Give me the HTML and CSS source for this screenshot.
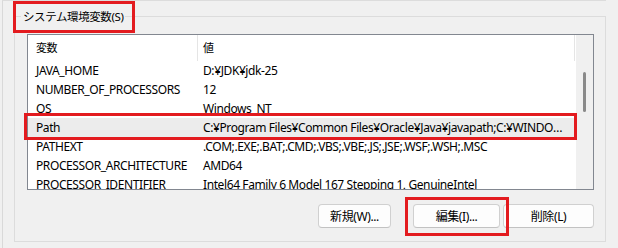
FILE: index.html
```html
<!DOCTYPE html>
<html lang="ja">
<head>
    <meta charset="UTF-8">
    <title>システム環境変数</title>
    <link rel="stylesheet" href="styles.css">
</head>
<body>
<div class="frame">
    <fieldset class="group">
        <legend>システム環境変数(S)</legend>
        <div class="list">
            <div class="list-body">
                <div class="row head">
                    <span class="name">変数</span>
                    <span class="value">値</span>
                    <span class="fill"></span>
                </div>
                <div class="row"><span class="name">JAVA_HOME</span><span class="value">D:¥JDK¥jdk-25</span></div>
                <div class="row"><span class="name">NUMBER_OF_PROCESSORS</span><span class="value">12</span></div>
                <div class="row"><span class="name">OS</span><span class="value">Windows_NT</span></div>
                <div class="row selected"><span class="name">Path</span><span class="value">C:¥Program Files¥Common Files¥Oracle¥Java¥javapath;C:¥WINDOWS¥system32;C:¥WINDOWS</span></div>
                <div class="row"><span class="name">PATHEXT</span><span class="value">.COM;.EXE;.BAT;.CMD;.VBS;.VBE;.JS;.JSE;.WSF;.WSH;.MSC</span></div>
                <div class="row"><span class="name">PROCESSOR_ARCHITECTURE</span><span class="value">AMD64</span></div>
                <div class="row"><span class="name">PROCESSOR_IDENTIFIER</span><span class="value">Intel64 Family 6 Model 167 Stepping 1, GenuineIntel</span></div>
            </div>
            <div class="scrollbar">
                <div class="thumb"></div>
            </div>
        </div>
        <div class="buttons">
            <button class="btn btn-new">新規(W)...</button>
            <button class="btn btn-edit">編集(I)...</button>
            <button class="btn btn-delete">削除(L)</button>
        </div>
    </fieldset>
</div>

<div class="mark mark-title"></div>
<div class="mark mark-path"></div>
<div class="mark mark-edit"></div>
</body>
</html>
```

FILE: styles.css
```css
* {
    margin: 0;
    padding: 0;
    box-sizing: border-box;
}

body {
    width: 618px;
    height: 248px;
    overflow: hidden;
    background-color: #f0f0f0;
    font-family: "Noto Sans", "Noto Sans CJK JP", sans-serif;
    font-size: 12px;
    letter-spacing: -0.4px;
    color: #000;
    position: relative;
}

.frame {
    margin-left: 2px;
    width: 604px;
    height: 248px;
    border-left: 1px solid #d9d9d9;
    border-top: 1px solid #dcdcdc;
}

.group {
    margin: 5px 0 0 11px;
    width: 592px;
    height: 236px;
    border: 1px solid #dcdcdc;
    padding: 7px 11px 0 12px;
}

.group legend {
    margin-left: -6px;
    padding: 0 2px;
    font-size: 11.5px;
    line-height: 21px;
}

/* list view */
.list {
    display: flex;
    width: 567px;
    height: 156px;
    border: 1px solid #828790;
    background-color: #fff;
}

.list-body {
    flex: 1;
    overflow: hidden;
}

.row {
    display: flex;
    height: 19px;
    line-height: 19px;
    white-space: nowrap;
}

.row .name {
    width: 170px;
    flex-shrink: 0;
    padding-left: 8px;
}

.row .value {
    flex: 1;
    min-width: 0;
    padding-left: 5px;
    padding-right: 8px;
    overflow: hidden;
    text-overflow: ellipsis;
}

.row.head {
    height: 26px;
    line-height: 26px;
    font-size: 11px;
}

.row.head .name {
    border-right: 1px solid #e5e5e5;
}

.row.head .fill {
    width: 2px;
    border-left: 1px solid #e5e5e5;
}

.row.selected {
    background-color: #ececec;
}

.scrollbar {
    width: 17px;
    background-color: #f0f0f0;
    padding: 37px 0 0 7px;
}

.scrollbar .thumb {
    width: 3px;
    height: 40px;
    border-radius: 2px;
    background-color: #8a8a8a;
}

/* buttons */
.buttons {
    display: flex;
    justify-content: flex-end;
    margin-top: 14px;
}

.btn {
    height: 24px;
    border: 1px solid #d0d0d0;
    border-bottom-color: #c2c2c2;
    border-radius: 4px;
    background-color: #fdfdfd;
    font-family: inherit;
    font-size: 12px;
    letter-spacing: -0.4px;
    color: #000;
}

.btn-new {
    width: 73px;
    margin-right: 22px;
}

.btn-edit {
    width: 87px;
    margin-right: 3px;
}

.btn-delete {
    width: 91px;
}

/* red annotation boxes */
.mark {
    position: absolute;
    border: 3px solid #e31b1f;
}

.mark-title {
    left: 13px;
    top: 1px;
    width: 122px;
    height: 32px;
}

.mark-path {
    left: 24px;
    top: 113px;
    width: 553px;
    height: 27px;
}

.mark-edit {
    left: 405px;
    top: 197px;
    width: 104px;
    height: 39px;
}
```
